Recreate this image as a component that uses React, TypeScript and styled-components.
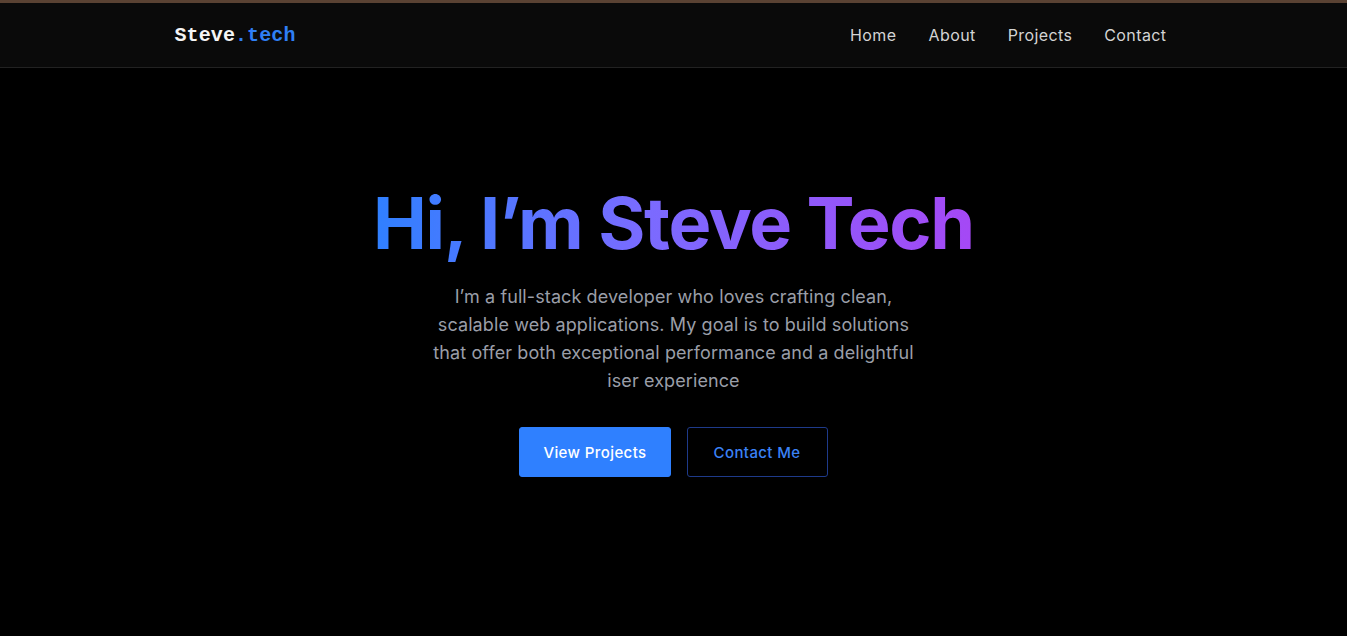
import React from 'react'
import styled, { createGlobalStyle } from 'styled-components'

const GlobalStyle = createGlobalStyle`
  * { box-sizing: border-box; }
  html, body {
    margin: 0;
    padding: 0;
    background: #000;
    font-family: Inter, "Noto Sans", sans-serif;
  }
`

const Page = styled.div`
  min-height: 636px;
  background: #000;
  border-top: 3px solid #5a4233;
`

const Header = styled.header`
  background: #0a0a0a;
  border-bottom: 1px solid #222;
`

const Container = styled.div`
  max-width: 1024px;
  margin: 0 auto;
  padding: 0 19px 0 13px;
`

const NavBar = styled.nav`
  height: 64px;
  display: flex;
  align-items: center;
  justify-content: space-between;
`

const Logo = styled.a`
  font-family: "Liberation Mono", "DejaVu Sans Mono", monospace;
  font-weight: 700;
  font-size: 20px;
  color: #f5f5f5;
  text-decoration: none;
  letter-spacing: 0.1px;
`

const LogoAccent = styled.span`
  color: #2f7ff5;
`

const NavLinks = styled.ul`
  display: flex;
  gap: 32px;
  list-style: none;
  margin: 0;
  padding: 0;
`

const NavLink = styled.a`
  color: #d4d4d4;
  font-size: 16px;
  text-decoration: none;
  letter-spacing: 0.4px;
`

const Hero = styled.section`
  display: flex;
  flex-direction: column;
  align-items: center;
  padding-top: 115px;
  text-align: center;
`

const Title = styled.h1`
  margin: 0;
  font-size: 72px;
  font-weight: 700;
  line-height: 1.1;
  letter-spacing: -1.3px;
  background: linear-gradient(90deg, #2f80ff 0%, #7a6bff 45%, #a548f5 100%);
  -webkit-background-clip: text;
  background-clip: text;
  color: transparent;
`

const Intro = styled.p`
  margin: 21px 0 0;
  max-width: 500px;
  color: #9a9ea8;
  font-size: 18px;
  line-height: 28px;
  letter-spacing: 0.1px;
`

const Actions = styled.div`
  display: flex;
  gap: 16px;
  margin-top: 32px;
`

const Button = styled.a<{ $variant: 'solid' | 'outline' }>`
  display: inline-flex;
  align-items: center;
  justify-content: center;
  height: 50px;
  padding: 0 ${(p) => (p.$variant === 'solid' ? '23px' : '26px')};
  border-radius: 3px;
  font-size: 15px;
  font-weight: 500;
  text-decoration: none;
  letter-spacing: 0.4px;
  background: ${(p) => (p.$variant === 'solid' ? '#2f80ff' : 'transparent')};
  color: ${(p) => (p.$variant === 'solid' ? '#fff' : '#3b82f6')};
  border: 1px solid ${(p) => (p.$variant === 'solid' ? '#2f80ff' : '#1e3a8a')};
`

const links = ['Home', 'About', 'Projects', 'Contact']

const App: React.FC = () => {
  return (
    <>
      <GlobalStyle />
      <Page>
        <Header>
          <Container>
            <NavBar>
              <Logo href="#">
                Steve<LogoAccent>.tech</LogoAccent>
              </Logo>
              <NavLinks>
                {links.map((l) => (
                  <li key={l}>
                    <NavLink href="#">{l}</NavLink>
                  </li>
                ))}
              </NavLinks>
            </NavBar>
          </Container>
        </Header>
        <Hero>
          <Title>Hi, I’m Steve Tech</Title>
          <Intro>
            I’m a full-stack developer who loves crafting clean, scalable web applications. My goal is to build
            solutions that offer both exceptional performance and a delightful iser experience
          </Intro>
          <Actions>
            <Button $variant="solid" href="#">View Projects</Button>
            <Button $variant="outline" href="#">Contact Me</Button>
          </Actions>
        </Hero>
      </Page>
    </>
  )
}

export default App
